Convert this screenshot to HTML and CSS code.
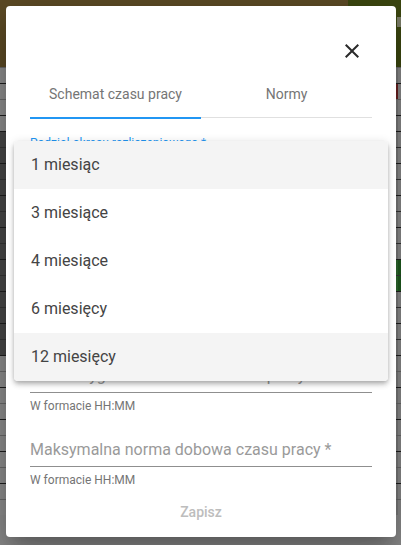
FILE: index.html
```html
<!DOCTYPE html>
<html lang="pl">
<head>
<meta charset="utf-8">
<title>Schemat czasu pracy</title>
<link rel="stylesheet" href="styles.css">
</head>
<body>
<div class="app">
  <div class="appbar">
    <div class="appbar-left"></div>
    <div class="appbar-right"><span class="appbar-mark"></span></div>
  </div>
  <div class="table">
    <div class="row light"><span class="num"></span></div>
    <div class="row light line"><span class="num red"></span></div>
    <div class="row light"><span class="num"></span></div>
    <div class="row light line"><span class="num"></span></div>
    <div class="row dark line"><span class="num"></span></div>
    <div class="row dark"><span class="num"></span></div>
    <div class="row dark line"><span class="num"></span></div>
    <div class="row dark"><span class="num"></span></div>
    <div class="row dark line"><span class="num"></span></div>
    <div class="row dark"><span class="num"></span></div>
    <div class="row dark line"><span class="num"></span></div>
    <div class="row dark"><span class="num"></span></div>
    <div class="row dark line green"><span class="num"></span></div>
    <div class="row dark green"><span class="num"></span></div>
    <div class="row dark line"><span class="num"></span></div>
    <div class="row dark"><span class="num"></span></div>
    <div class="row dark line"><span class="num"></span></div>
    <div class="row dark"><span class="num"></span></div>
    <div class="row light line"><span class="num"></span></div>
    <div class="row light"><span class="num"></span></div>
    <div class="row light line"><span class="num"></span></div>
    <div class="row light"><span class="num"></span></div>
    <div class="row light line"><span class="num"></span></div>
    <div class="row light"><span class="num"></span></div>
    <div class="row light line"><span class="num"></span></div>
    <div class="row light"><span class="num"></span></div>
    <div class="row light line"><span class="num"></span></div>
    <div class="row light"><span class="num"></span></div>
  </div>
</div>

<div class="dialog">
  <div class="dialog-header">
    <button class="close-btn" aria-label="Zamknij">
      <svg width="24" height="24" viewBox="0 0 24 24"><path d="M19 6.41L17.59 5 12 10.59 6.41 5 5 6.41 10.59 12 5 17.59 6.41 19 12 13.41 17.59 19 19 17.59 13.41 12z" fill="currentColor"/></svg>
    </button>
  </div>
  <div class="tabs">
    <div class="tab active">Schemat czasu pracy</div>
    <div class="tab">Normy</div>
  </div>
  <div class="form">
    <div class="field select-field">
      <div class="float-label">Podział okresu rozliczeniowego *</div>
      <div class="field-input"></div>
      <div class="underline"></div>
      <div class="hint"></div>
    </div>
    <div class="field">
      <div class="field-input placeholder">Średniotygodniowa norma czasu pracy</div>
      <div class="underline"></div>
      <div class="hint">W formacie HH:MM</div>
    </div>
    <div class="field">
      <div class="field-input placeholder">Maksymalna norma dobowa czasu pracy *</div>
      <div class="underline"></div>
      <div class="hint">W formacie HH:MM</div>
    </div>
  </div>
  <div class="actions">
    <button class="save-btn" disabled>Zapisz</button>
  </div>

  <div class="menu">
    <div class="menu-item hover">1 miesiąc</div>
    <div class="menu-item">3 miesiące</div>
    <div class="menu-item">4 miesiące</div>
    <div class="menu-item">6 miesięcy</div>
    <div class="menu-item hover">12 miesięcy</div>
  </div>
</div>
</body>
</html>
```

FILE: styles.css
```css
* { box-sizing: border-box; }
html, body {
  margin: 0;
  padding: 0;
  width: 401px;
  height: 545px;
  overflow: hidden;
  font-family: Roboto, "Liberation Sans", sans-serif;
}
body {
  background: #8b8b8b;
  position: relative;
}
.app {
  display: flex;
  flex-direction: column;
}
.appbar {
  height: 67px;
  display: flex;
}
.appbar-left {
  flex: 1;
  background: #5c4a25;
}
.appbar-right {
  width: 53px;
  background: #3c4710;
  display: flex;
  align-items: flex-start;
  justify-content: flex-end;
  padding-top: 17px;
}
.appbar-mark {
  width: 4px;
  height: 10px;
  background: #7d7f6a;
}
.table {
  display: flex;
  flex-direction: column;
}
.row {
  height: 16px;
  display: flex;
  justify-content: flex-end;
  border-top: 1px solid rgba(0,0,0,0.25);
}
.row.line { border-top: 1px solid #1e1e1e; }
.row.light { background: #8d8d8d; }
.row.dark { background: #474747; }
.num {
  width: 5px;
  height: 15px;
  background: #8a8a8a;
  border-left: 2px solid #7a7a7a;
}
.num.red { border-left-color: #6a2020; }
.row.green .num { background: #1f5a1f; border-left-color: #2e6a2e; }

.dialog {
  position: absolute;
  left: 6px;
  top: 6px;
  width: 390px;
  background: #fff;
  border-radius: 4px;
  box-shadow: 0 11px 15px -7px rgba(0,0,0,.2), 0 24px 38px 3px rgba(0,0,0,.14), 0 9px 46px 8px rgba(0,0,0,.12);
  padding: 24px 24px 7px;
  display: flex;
  flex-direction: column;
}
.dialog-header {
  display: flex;
  justify-content: flex-end;
  height: 40px;
}
.close-btn {
  width: 40px;
  height: 40px;
  padding: 0;
  margin-top: 1px;
  border: 0;
  background: transparent;
  color: #2a2a2a;
  display: flex;
  align-items: center;
  justify-content: center;
}
.tabs {
  display: flex;
  height: 48px;
  border-bottom: 1px solid #e0e0e0;
}
.tab {
  flex: 1;
  display: flex;
  align-items: center;
  justify-content: center;
  font-size: 14px;
  color: #757575;
  height: 49px;
  margin-bottom: -1px;
  padding-bottom: 1px;
}
.tab.active {
  border-bottom: 2px solid #2196f3;
  padding-bottom: 0;
}
.form {
  display: flex;
  flex-direction: column;
  gap: 27px;
  margin-top: 18px;
}
.field {
  display: flex;
  flex-direction: column;
}
.float-label {
  font-size: 12px;
  line-height: 14px;
  color: #2196f3;
}
.select-field .field-input { margin-top: 142px; }
.field-input {
  height: 20px;
  font-size: 16px;
  line-height: 20px;
  color: #212121;
  white-space: nowrap;
}
.field-input.placeholder { color: #9a9a9a; }
.underline {
  height: 1px;
  background: #8f8f8f;
  margin-top: 6px;
}
.hint {
  font-size: 12px;
  line-height: 14px;
  height: 14px;
  margin-top: 6px;
  color: #757575;
}
.actions {
  display: flex;
  justify-content: center;
  margin-top: 7px;
}
.save-btn {
  height: 36px;
  padding: 0 16px;
  border: 0;
  background: transparent;
  font-family: Roboto, "Liberation Sans", sans-serif;
  font-size: 14px;
  font-weight: 500;
  color: #bdbdbd;
}
.menu {
  position: absolute;
  left: 8px;
  top: 135px;
  width: 374px;
  background: #fff;
  border-radius: 4px;
  overflow: hidden;
  box-shadow: 0 2px 4px -1px rgba(0,0,0,.2), 0 4px 5px 0 rgba(0,0,0,.14), 0 1px 10px 0 rgba(0,0,0,.12);
}
.menu-item {
  height: 48px;
  display: flex;
  align-items: center;
  padding-left: 17px;
  padding-bottom: 1px;
  font-size: 16px;
  color: #444;
}
.menu-item.hover { background: #f4f4f4; }
```
